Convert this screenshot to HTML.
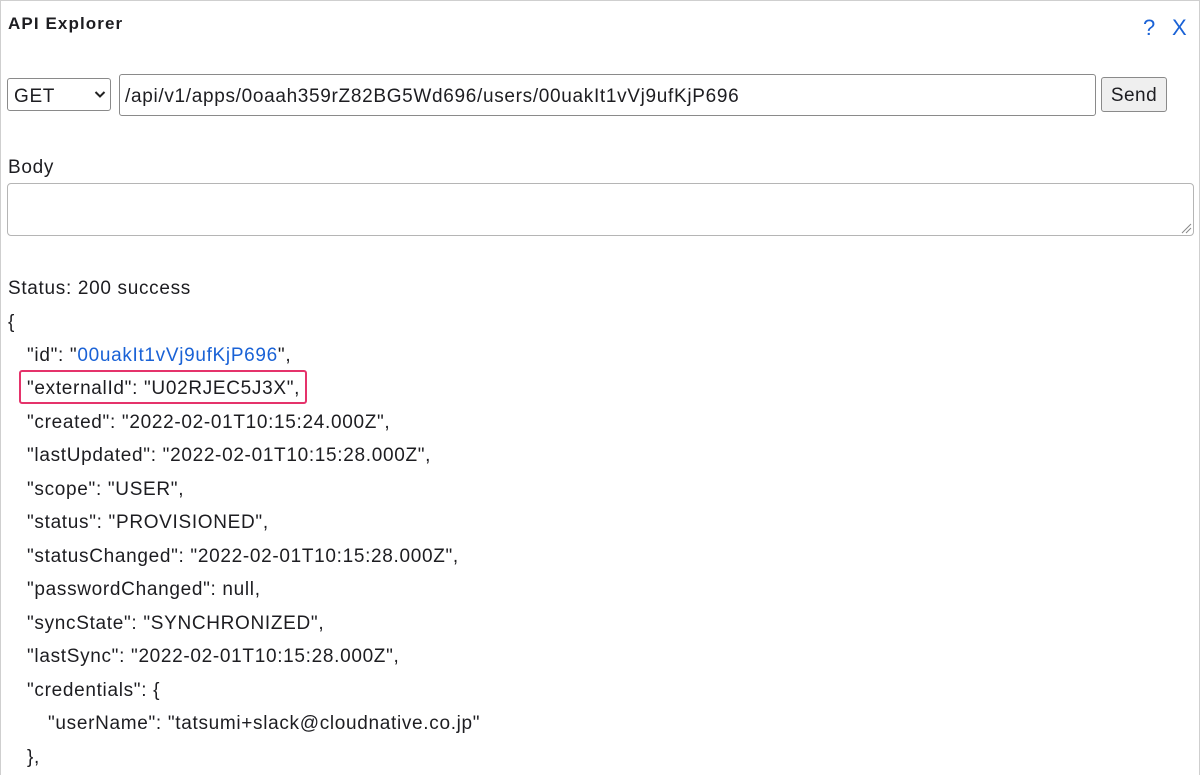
<!DOCTYPE html>
<html><head><meta charset="utf-8"><style>
html,body{margin:0;padding:0;background:#fff;overflow:hidden}
body{width:1200px;height:775px;overflow:hidden;position:relative;font-family:"Liberation Sans",Arial,sans-serif;color:#1d1d21}
.frame{position:absolute;left:0;top:0;width:1198px;height:800px;border:1px solid #cfcfcf}
.t{position:absolute;white-space:pre;font-size:19px;line-height:20px;letter-spacing:0.68px;margin-top:2px}
.title{left:8px;top:12px;font-weight:bold;font-size:17px;letter-spacing:1.1px}
.sel{position:absolute;left:7px;top:78px;width:104px;height:33px;border:1px solid #8a8a8a;border-radius:3px;box-sizing:border-box}
.url{position:absolute;left:119px;top:74px;width:977px;height:42px;border:1px solid #8a8a8a;border-radius:3px;box-sizing:border-box}
.btn{position:absolute;left:1101px;top:77px;width:66px;height:35px;border:1px solid #8a8a8a;border-radius:3px;background:#efefef;box-sizing:border-box;font-size:19px;text-align:center;line-height:35px;letter-spacing:0.5px}
.ta{position:absolute;left:7px;top:183px;width:1187px;height:53px;border:1px solid #b5b5b5;border-radius:4px;box-sizing:border-box}
.hl{position:absolute;left:19px;top:370px;width:288px;height:34px;border:2.5px solid #e5336b;border-radius:3px;box-sizing:border-box}
.blue{color:#1a62d6}
</style></head><body>
<div class="frame"></div>
<div class="t title">API Explorer</div>
<div class="t blue" style="left:1143px;top:14px;font-size:22px;line-height:24px">?</div>
<div class="t blue" style="left:1172px;top:14px;font-size:22px;line-height:24px">X</div>
<div class="sel"></div>
<div class="t" style="left:14px;top:85px">GET</div>
<svg style="position:absolute;left:94px;top:90px" width="12" height="9" viewBox="0 0 12 9"><path d="M1.5 2 L6 6.5 L10.5 2" fill="none" stroke="#222" stroke-width="2"/></svg>
<div class="url"></div>
<div class="t" style="left:125px;top:85px">/api/v1/apps/0oaah359rZ82BG5Wd696/users/00uakIt1vVj9ufKjP696</div>
<div class="btn">Send</div>
<div class="t" style="left:8px;top:156px">Body</div>
<div class="ta"></div>
<svg style="position:absolute;left:1180px;top:222px" width="12" height="12"><path d="M2 11 L11 2 M6 11 L11 6" stroke="#888" stroke-width="1"/></svg>
<div class="t" style="left:8px;top:277px">Status: 200 success</div>
<div class="t" style="left:8px;top:311px">{</div>
<div class="t" style="left:27px;top:344px">"id": "<span class="blue">00uakIt1vVj9ufKjP696</span>",</div>
<div class="t" style="left:27px;top:377px">"externalId": "U02RJEC5J3X",</div>
<div class="hl"></div>
<div class="t" style="left:27px;top:411px">"created": "2022-02-01T10:15:24.000Z",</div>
<div class="t" style="left:27px;top:444px">"lastUpdated": "2022-02-01T10:15:28.000Z",</div>
<div class="t" style="left:27px;top:478px">"scope": "USER",</div>
<div class="t" style="left:27px;top:511px">"status": "PROVISIONED",</div>
<div class="t" style="left:27px;top:545px">"statusChanged": "2022-02-01T10:15:28.000Z",</div>
<div class="t" style="left:27px;top:578px">"passwordChanged": null,</div>
<div class="t" style="left:27px;top:612px">"syncState": "SYNCHRONIZED",</div>
<div class="t" style="left:27px;top:645px">"lastSync": "2022-02-01T10:15:28.000Z",</div>
<div class="t" style="left:27px;top:679px">"credentials": {</div>
<div class="t" style="left:48px;top:712px">"userName": "tatsumi+slack@cloudnative.co.jp"</div>
<div class="t" style="left:27px;top:746px">},</div>
</body></html>
